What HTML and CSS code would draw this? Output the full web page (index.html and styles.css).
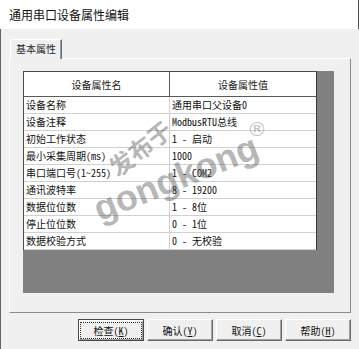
FILE: index.html
```html
<!DOCTYPE html>
<html lang="zh-CN">
<head>
<meta charset="utf-8">
<title>通用串口设备属性编辑</title>
<link rel="stylesheet" href="styles.css">
</head>
<body>
<div class="win">
  <div class="titlebar">通用串口设备属性编辑</div>
  <div class="client">
    <div class="tabs"><div class="tab">基本属性</div></div>
    <div class="panel">
      <div class="grid">
        <table class="props">
          <thead>
            <tr><th>设备属性名</th><th>设备属性值</th></tr>
          </thead>
          <tbody>
            <tr><td>设备名称</td><td>通用串口父设备0</td></tr>
            <tr><td>设备注释</td><td>ModbusRTU总线</td></tr>
            <tr><td>初始工作状态</td><td>1 - 启动</td></tr>
            <tr><td>最小采集周期(ms)</td><td>1000</td></tr>
            <tr><td>串口端口号(1~255)</td><td>1 - COM2</td></tr>
            <tr><td>通讯波特率</td><td>8 - 19200</td></tr>
            <tr><td>数据位位数</td><td>1 - 8位</td></tr>
            <tr><td>停止位位数</td><td>0 - 1位</td></tr>
            <tr><td>数据校验方式</td><td>0 - 无校验</td></tr>
          </tbody>
        </table>
      </div>
    </div>
    <div class="buttons">
      <button class="btn default"><span class="focus">检查(<u>K</u>)</span></button>
      <button class="btn">确认(<u>Y</u>)</button>
      <button class="btn">取消(<u>C</u>)</button>
      <button class="btn">帮助(<u>H</u>)</button>
    </div>
  </div>
  <div class="watermark" aria-hidden="true">
    <span class="wm-cn">发布于</span>
    <span class="wm-en">gongkong</span>
    <span class="wm-r">®</span>
  </div>
</div>
</body>
</html>
```

FILE: styles.css
```css
html, body {
  margin: 0;
  padding: 0;
  background: #ffffff;
}
body {
  width: 359px;
  height: 349px;
  overflow: hidden;
  font-family: "Noto Sans Mono CJK SC", "Noto Sans CJK SC", sans-serif;
  color: #000;
}
.win {
  position: relative;
  width: 359px;
  height: 349px;
}
.titlebar {
  height: 29px;
  box-sizing: border-box;
  border-right: 1px solid #505050;
  background: #fff;
  padding-left: 9px;
  font-family: "Noto Sans CJK SC", sans-serif;
  font-size: 12px;
  line-height: 30px;
  color: #111;
}
.client {
  height: 320px;
  box-sizing: border-box;
  background: #f0f0f0;
  border-left: 1px solid #646464;
  padding: 10px 7px 0 8px;
  display: flex;
  flex-direction: column;
}
.tabs {
  display: flex;
  height: 19px;
  position: relative;
  z-index: 1;
}
.tab {
  margin-left: 1px;
  width: 52px;
  height: 20px;
  box-sizing: border-box;
  background: #f0f0f0;
  border-top: 1px solid #fff;
  border-left: 1px solid #fff;
  border-right: 1px solid #6a6a6a;
  border-top-left-radius: 2px;
  box-shadow: inset -1px 0 0 #a0a0a0;
  font-size: 10px;
  line-height: 18px;
  padding-left: 5px;
  color: #222;
}
.panel {
  width: 342px;
  height: 255px;
  box-sizing: border-box;
  border-top: 1px solid #fff;
  border-left: 1px solid #fff;
  border-right: 1px solid #8c8c8c;
  border-bottom: 1px solid #8c8c8c;
  padding: 12px 16px 19px 13px;
}
.grid {
  width: 311px;
  height: 222px;
  background: #808080;
}
.props {
  width: 294px;
  border-collapse: separate;
  border-spacing: 0;
  table-layout: fixed;
  background: #fff;
  border-top: 1px solid #4a4a4a;
  border-left: 1px solid #4a4a4a;
  border-right: 1px solid #3c3c3c;
  font-size: 10px;
}
.props th {
  height: 24px;
  padding: 0;
  font-weight: normal;
  text-align: center;
  border-bottom: 1px solid #5a5a5a;
  color: #222;
}
.props th:first-child {
  border-right: 1px solid #5a5a5a;
}
.props td {
  height: 16px;
  padding: 0 0 0 2px;
  line-height: 16px;
  border-bottom: 1px solid #d0d0d0;
  white-space: nowrap;
  overflow: hidden;
  color: #111;
}
.props td:first-child {
  border-right: 1px solid #d0d0d0;
}
.buttons {
  display: flex;
  justify-content: flex-end;
  gap: 3px;
  margin-top: 6px;
  width: 342px;
}
.btn {
  width: 66px;
  height: 22px;
  box-sizing: border-box;
  margin: 0;
  padding: 0;
  background: #f0f0f0;
  border-top: 1px solid #fff;
  border-left: 1px solid #fff;
  border-right: 1px solid #6a6a6a;
  border-bottom: 1px solid #6a6a6a;
  box-shadow: inset -1px -1px 0 #a0a0a0;
  font-family: "Noto Sans Mono CJK SC", "Noto Sans CJK SC", sans-serif;
  font-size: 10px;
  color: #111;
  display: flex;
  align-items: center;
  justify-content: center;
}
.btn.default {
  border: 1px solid #4a4a4a;
  box-shadow: inset 1px 1px 0 #fff, inset -1px -1px 0 #a0a0a0;
}
.btn .focus {
  display: flex;
  align-items: center;
  justify-content: center;
  width: 60px;
  height: 15px;
  outline: 1px dotted #333;
}
.btn u {
  text-decoration-thickness: 1px;
  text-underline-offset: 1px;
}
.watermark {
  position: absolute;
  left: 0;
  top: 0;
  width: 359px;
  height: 349px;
  pointer-events: none;
  color: rgba(80, 80, 80, 0.42);
}
.watermark span {
  position: absolute;
  white-space: nowrap;
}
.wm-cn {
  left: 140px;
  top: 148px;
  font-family: "Noto Sans CJK SC", sans-serif;
  font-weight: bold;
  font-size: 24px;
  line-height: 1;
  transform: translate(-50%, -50%) rotate(-38deg);
}
.wm-en {
  left: 176px;
  top: 178px;
  font-family: "Liberation Sans", sans-serif;
  font-weight: bold;
  font-size: 36px;
  line-height: 1;
  transform: translate(-50%, -50%) rotate(-22deg);
}
.wm-r {
  left: 257px;
  top: 129px;
  font-family: "DejaVu Sans", sans-serif;
  font-size: 20px;
  line-height: 1;
  color: rgba(80, 80, 80, 0.35);
  transform: translate(-50%, -50%);
}
```
